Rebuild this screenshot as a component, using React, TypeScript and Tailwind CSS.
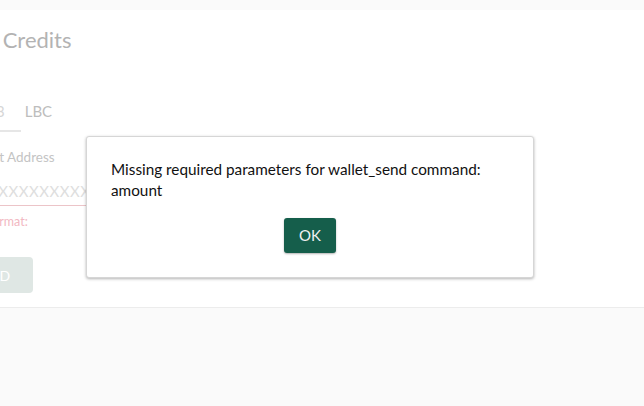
export default function App() {
    return (
        <div
            className="relative h-[406px] w-full overflow-hidden bg-[#fafafa] pt-[10px]"
            style={{ fontFamily: 'Lato, "Noto Sans", sans-serif' }}
        >
            {/* Background card (faded) */}
            <div className="h-[298px] overflow-hidden border-b border-[#ececec] bg-white">
                <div className="-ml-[51px] pt-[16px]">
                    <h1 className="text-[22px] leading-[28px] text-[#b3b3b3]">Send Credits</h1>

                    {/* Tabs */}
                    <div className="mt-[46px] flex">
                        <div className="border-b-2 border-[#e6e6e6] px-4 pb-[8px] text-[15px] leading-[22px] text-[#d6d6d6]">
                            Web3
                        </div>
                        <div className="px-1 pb-[8px] text-[15px] leading-[22px] text-[#bdbdbd]">LBC</div>
                    </div>

                    {/* Address field */}
                    <div className="mt-[16px] w-[260px]">
                        <div className="text-[13.5px] leading-[18px] text-[#c4c4c4]">Recipient Address</div>
                        <div className="mt-[14px] border-b border-[#ecc4c8] pb-[3px] text-[15px] leading-[22px] tracking-[0.5px] text-[#dedede]">
                            bXXXXXXXXXXXXXXXXXXXX
                        </div>
                        <div className="mt-[8px] text-[12.5px] leading-[16px] text-[#f2b8c2]">Invalid format:</div>
                    </div>

                    <button className="mt-[27px] h-[36px] rounded-sm bg-[#dfe7e4] px-[23px] text-[14px] tracking-wide text-white">
                        SEND
                    </button>
                </div>
            </div>

            {/* Dialog */}
            <div className="absolute left-[86px] top-[136px] w-[448px] rounded-[3px] border border-[#d6d6d6] bg-white px-[24px] pb-[24px] pt-[22px] shadow-[0_1px_3px_rgba(0,0,0,0.3)]">
                <p className="text-[15.3px] leading-[21px] text-[#111]">
                    Missing required parameters for wallet_send command: amount
                </p>
                <div className="mt-[17px] flex justify-center">
                    <button className="h-[35px] w-[52px] rounded-[3px] bg-[#155e4b] text-[15px] text-[#f0f0f0] shadow-[0_1px_2px_rgba(0,0,0,0.3)]">
                        OK
                    </button>
                </div>
            </div>
        </div>
    );
}
